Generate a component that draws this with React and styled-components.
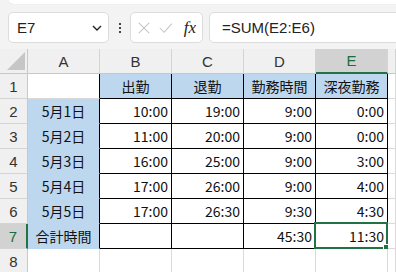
import React from 'react';
import styled, { createGlobalStyle } from 'styled-components';

const COLS = ['A', 'B', 'C', 'D', 'E'];

const rows = [
  ['', '出勤', '退勤', '勤務時間', '深夜勤務'],
  ['5月1日', '10:00', '19:00', '9:00', '0:00'],
  ['5月2日', '11:00', '20:00', '9:00', '0:00'],
  ['5月3日', '16:00', '25:00', '9:00', '3:00'],
  ['5月4日', '17:00', '26:00', '9:00', '4:00'],
  ['5月5日', '17:00', '26:30', '9:30', '4:30'],
  ['合計時間', '', '', '45:30', '11:30'],
  ['', '', '', '', ''],
];

const App = () => (
  <React.Fragment>
    <GlobalStyle />
    <Window>
      <Toolbar>
        <TopPanel />
        <NameBox>
          <span>E7</span>
          <svg width="10" height="6" viewBox="0 0 10 6">
            <path d="M1 1 L5 5 L9 1" fill="none" stroke="#222" strokeWidth="1.4" />
          </svg>
        </NameBox>
        <Dots>
          <i />
          <i />
          <i />
        </Dots>
        <FxBox>
          <svg width="14" height="14" viewBox="0 0 14 14">
            <path d="M1 1 L13 13 M13 1 L1 13" stroke="#c4c4c4" strokeWidth="1.2" />
          </svg>
          <svg width="16" height="12" viewBox="0 0 16 12">
            <path d="M1 6 L6 11 L15 1" fill="none" stroke="#c4c4c4" strokeWidth="1.2" />
          </svg>
          <Fx>fx</Fx>
        </FxBox>
        <FormulaBox>=SUM(E2:E6)</FormulaBox>
      </Toolbar>
      <Sheet>
        <Corner>
          <svg width="18" height="18" viewBox="0 0 18 18">
            <path d="M18 0 L18 18 L0 18 Z" fill="#c6c6c6" />
          </svg>
        </Corner>
        {COLS.map(c => (
          <ColHead key={c} $active={c === 'E'}>
            {c}
          </ColHead>
        ))}
        <ColHead $tail />
        {rows.map((row, r) => (
          <React.Fragment key={r}>
            <RowHead $active={r === 6}>{r + 1}</RowHead>
            {row.map((text, c) => {
              const inTable = r < 7;
              const isLabel = c === 0;
              const filled = (isLabel && r > 0 && r < 7) || (!isLabel && r === 0);
              const selected = r === 6 && c === 4;
              return (
                <Cell
                  key={c}
                  $fill={filled}
                  $boxed={inTable && !isLabel}
                  $edge={inTable && isLabel}
                  $align={isLabel || r === 0 ? 'center' : 'flex-end'}
                >
                  {text}
                  {selected && (
                    <Selection>
                      <Handle />
                    </Selection>
                  )}
                </Cell>
              );
            })}
            <Cell $tail />
          </React.Fragment>
        ))}
      </Sheet>
    </Window>
  </React.Fragment>
);

const GlobalStyle = createGlobalStyle`
  html, body {
    margin: 0;
    padding: 0;
    background: #fff;
  }
  body {
    font-family: "Noto Sans CJK JP", "Noto Sans", sans-serif;
    overflow: hidden;
  }
`;

const Window = styled.div`
  width: 396px;
  height: 272px;
  overflow: hidden;
  display: flex;
  flex-direction: column;
`;

const Toolbar = styled.div`
  position: relative;
  height: 49px;
  flex: none;
  background: #f3f3f3;
  display: flex;
  align-items: flex-start;
  padding: 12px 0 0 8px;
  box-sizing: border-box;
`;

const TopPanel = styled.div`
  position: absolute;
  left: 8px;
  right: -10px;
  top: -10px;
  height: 14px;
  background: #fff;
  border-radius: 0 0 0 6px;
  box-shadow: 0 0 1px rgba(0, 0, 0, 0.15);
`;

const Box = styled.div`
  height: 31px;
  box-sizing: border-box;
  background: #fff;
  border: 1px solid #dcdcdc;
  border-radius: 5px;
  display: flex;
  align-items: center;
`;

const NameBox = styled(Box)`
  width: 101px;
  padding: 0 6px 0 8px;
  justify-content: space-between;
  font-family: "Liberation Sans", Arial, sans-serif;
  font-size: 15px;
  color: #222;
`;

const Dots = styled.div`
  width: 21px;
  height: 31px;
  display: flex;
  flex-direction: column;
  align-items: center;
  justify-content: center;
  gap: 2px;

  > i {
    width: 2px;
    height: 2px;
    background: #444;
  }
`;

const FxBox = styled(Box)`
  width: 73px;
  padding: 0 6px 0 7px;
  gap: 9px;
`;

const Fx = styled.span`
  font-family: "Liberation Serif", "Times New Roman", serif;
  font-style: italic;
  font-size: 17px;
  color: #222;
  margin-left: 2px;
`;

const FormulaBox = styled(Box)`
  flex: 1;
  margin-left: 6px;
  margin-right: -10px;
  padding-left: 12px;
  font-family: "Liberation Sans", Arial, sans-serif;
  font-size: 15px;
  color: #222;
`;

const Sheet = styled.div`
  display: grid;
  grid-template-columns: 28px repeat(5, 72px) 1fr;
  grid-auto-rows: 25px;
  flex: 1;
`;

const Corner = styled.div`
  background: #f0f0f0;
  border-right: 1px solid #c8c8c8;
  border-bottom: 1px solid #c8c8c8;
  display: flex;
  align-items: flex-end;
  justify-content: flex-end;
  padding: 0 2px 3px 0;
`;

const ColHead = styled.div`
  background: ${p => (p.$active ? '#d2d2d2' : '#f0f0f0')};
  color: ${p => (p.$active ? '#1d6b40' : '#333')};
  border-right: 1px solid #d4d4d4;
  border-bottom: ${p => (p.$active ? '2px solid #217346' : '1px solid #c8c8c8')};
  display: flex;
  align-items: center;
  justify-content: center;
  font-family: "Liberation Sans", Arial, sans-serif;
  font-size: 15px;
`;

const RowHead = styled.div`
  background: ${p => (p.$active ? '#d2d2d2' : '#f0f0f0')};
  color: ${p => (p.$active ? '#1d6b40' : '#333')};
  border-right: ${p => (p.$active ? '2px solid #217346' : '1px solid #c8c8c8')};
  border-bottom: 1px solid #d4d4d4;
  display: flex;
  align-items: center;
  justify-content: center;
  font-family: "Liberation Sans", Arial, sans-serif;
  font-size: 15px;
`;

const Cell = styled.div`
  position: relative;
  background: ${p => (p.$fill ? '#bdd7ee' : '#fff')};
  border-right: 1px solid
    ${p => (p.$boxed || p.$edge ? '#000' : p.$fill ? '#bdd7ee' : '#dadada')};
  border-bottom: 1px solid
    ${p => (p.$boxed ? '#000' : p.$fill ? '#bdd7ee' : '#dadada')};
  display: flex;
  align-items: center;
  justify-content: ${p => p.$align || 'flex-end'};
  padding: 0 3px;
  font-size: 14px;
  color: #111;
  white-space: nowrap;
  line-height: 1;
`;

const Selection = styled.div`
  position: absolute;
  left: -2px;
  top: -2px;
  right: -1px;
  bottom: -1px;
  border: 2px solid #217346;
  pointer-events: none;
`;

const Handle = styled.div`
  position: absolute;
  right: -4px;
  bottom: -4px;
  width: 5px;
  height: 5px;
  background: #217346;
  border: 1px solid #fff;
`;

export default App;
